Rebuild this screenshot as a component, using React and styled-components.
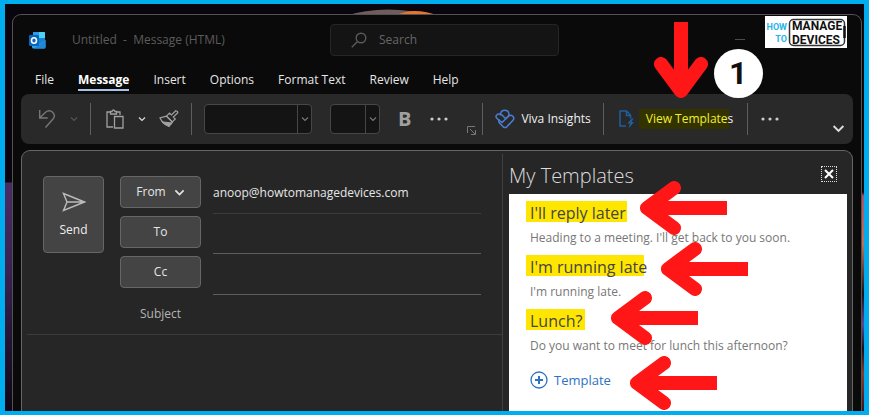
import React from 'react';
import styled, { createGlobalStyle } from 'styled-components';

// styled-components

const GlobalStyle = createGlobalStyle`
    * {
        box-sizing: border-box;
    }

    body {
        margin: 0;
        font-family: 'Open Sans', 'Liberation Sans', sans-serif;
        font-size: 12px;
        line-height: 16px;
        color: white;
    }

    button, input, select {
        font: inherit;
        color: inherit;
    }
`;

const Desktop = styled.div`
    position: relative;
    display: flex;
    min-height: 100vh;
    overflow: hidden;
    padding: 10px 2px 0 7px;
    border: 4px solid #00adef;
    border-width: 4px 5px;
    background: linear-gradient(#08050f 178px, #4a2c64 179px, #3a2150 66%, #0c0616);
`;

const Wallpaper = styled.svg`
    position: absolute;
    top: 4px;
    left: 340px;
`;

const Shine = styled.div`
    position: absolute;
    right: 0;
    top: 0;
    bottom: 0;
    width: 2px;
    background: linear-gradient(#07070a 188px, #b0506a 192px, #c0705a 240px, #1a1018 290px, #5a4a9a 320px, #1a1018 345px, #8a3a2a 370px, #3a1420);
`;

const Window = styled.div`
    position: relative;
    display: flex;
    flex-direction: column;
    flex: 1;
    min-width: 0;
    padding: 0 8px;
    border: 1px solid #555351;
    border-bottom: none;
    border-radius: 9px 9px 0 0;
    background: #0a0a0a;
`;

const TitleBar = styled.header`
    display: flex;
    align-items: center;
    height: 50px;
    padding-left: 8px;
`;

const Title = styled.span`
    width: 222px;
    margin: 0 11px 0 26px;
    color: #5c5c5c;
    white-space: pre;
`;

const SearchBox = styled.label`
    display: flex;
    align-items: center;
    gap: 12px;
    width: 229px;
    height: 32px;
    margin-left: 25px;
    padding-left: 20px;
    border: 1px solid #262626;
    border-radius: 4px;
    background: #141414;
    color: #5a5a5a;
`;

const SearchInput = styled.input`
    flex: 1;
    min-width: 0;
    padding: 0;
    border: none;
    background: none;

    &:focus {
        outline: none;
    }

    &::placeholder {
        color: #666;
        opacity: 1;
    }
`;

const Minimize = styled.button`
    display: flex;
    margin-left: auto;
    margin-right: 108px;
    padding: 0;
    border: none;
    background: none;
    color: #4c4c4c;
`;

const Brand = styled.div`
    position: absolute;
    top: 1px;
    right: 14px;
    display: flex;
`;

const Menu = styled.nav`
    display: flex;
    gap: 24px;
    height: 29px;
    padding: 5px 0 0 14px;
`;

const MenuItem = styled.button`
    height: 21px;
    padding: 0;
    border: none;
    border-bottom: 2px solid ${({ $active }) => ($active ? '#a9c4e8' : 'transparent')};
    background: none;
    color: ${({ $active }) => ($active ? '#fff' : '#e6e6e6')};
    font-weight: ${({ $active }) => ($active ? 700 : 400)};
    white-space: nowrap;
`;

const Ribbon = styled.div`
    display: flex;
    align-items: center;
    height: 50px;
    padding: 0 8px 0 16px;
    border-radius: 8px;
    background: #292929;
`;

const Group = styled.div`
    position: relative;
    display: flex;
    align-items: center;
    gap: ${({ $gap }) => $gap || 0}px;
    height: 32px;
    padding: 0 ${({ $end }) => $end || 12}px 0 ${({ $start }) => $start || 12}px;
    border-right: 1px solid #5e5e5e;

    &:first-child {
        padding-left: 0;
    }

    &:last-child {
        flex: 1;
        padding-right: 0;
        border-right: none;
    }
`;

const IconButton = styled.button`
    display: flex;
    align-items: center;
    padding: 0;
    border: none;
    background: none;
    color: ${({ $color }) => $color || '#a0a0a0'};
    font-size: 20px;
    font-weight: 700;
`;

const Combo = styled.div`
    display: flex;
    width: ${({ $width }) => $width}px;
    height: 30px;
    border: 1px solid #474747;
    border-radius: 4px;
    background: #141414;
    color: #777;
`;

const ComboSelect = styled.select`
    flex: 1;
    min-width: 0;
    border: none;
    appearance: none;
    background: none;
`;

const ComboArrow = styled.span`
    display: flex;
    align-items: center;
    justify-content: center;
    width: 14px;
    border-left: 1px solid #474747;
`;

const Launcher = styled.button`
    align-self: flex-end;
    display: flex;
    padding: 0;
    border: none;
    background: none;
    color: #777;
`;

const Expand = styled(IconButton)`
    align-self: flex-end;
    margin-left: auto;
`;

const Command = styled.button`
    display: flex;
    align-items: center;
    gap: ${({ $gap }) => $gap}px;
    padding: 0;
    border: none;
    background: none;
    color: #f0f0f0;
    white-space: nowrap;
`;

const Marked = styled.span`
    padding: 2px 0 2px 7px;
    background: linear-gradient(90deg, #333300 90px, transparent 90px);
    color: #f1ee30;
`;

const Tail = styled.span`
    color: #f0f0f0;
`;

const DownArrow = styled.svg`
    position: absolute;
    left: 50px;
    bottom: 37px;
`;

const StepBadge = styled.span`
    position: absolute;
    left: 110px;
    bottom: 37px;
    width: 49px;
    height: 49px;
    border-radius: 50%;
    background: white;
    color: #111;
    font-family: Roboto, sans-serif;
    font-size: 32px;
    font-weight: 700;
    line-height: 49px;
    text-align: center;
`;

const Content = styled.div`
    display: flex;
    flex: 1;
    margin-top: 6px;
    border: 1px solid #666;
    border-bottom: none;
    border-radius: 9px 9px 0 0;
    background: #262626;
`;

const Compose = styled.form`
    flex: 1;
    min-width: 0;
    padding: 25px 0 0 5px;
`;

const Address = styled.div`
    display: grid;
    grid-template-columns: 65px 81px 1fr;
    column-gap: 12px;
    padding: 0 21px 0 16px;
`;

const SendButton = styled.button`
    display: flex;
    flex-direction: column;
    align-items: center;
    gap: 10px;
    width: 61px;
    height: 77px;
    padding: 15px 0 0;
    border: 1px solid #666;
    border-radius: 4px;
    background: #444;
    color: #eee;
`;

const Buttons = styled.div`
    display: flex;
    flex-direction: column;
    gap: 8px;
`;

const FieldButton = styled.button`
    display: flex;
    align-items: center;
    justify-content: center;
    gap: 8px;
    height: 32px;
    border: 1px solid #666;
    border-radius: 4px;
    background: #444;
    color: #e6e6e6;
`;

const Fields = styled.div`
    display: flex;
    flex-direction: column;
`;

const FieldInput = styled.input`
    height: ${({ $height }) => $height}px;
    padding: 0 0 5px;
    border: none;
    border-bottom: 1px solid ${({ $faint }) => ($faint ? '#3c3c3c' : '#5c5c5c')};
    background: none;
    color: #e6e6e6;

    &:focus {
        outline: none;
    }
`;

const SubjectRow = styled.label`
    display: flex;
    height: 40px;
    padding: 11px 22px 0 93px;
    border-bottom: 1px solid #3c3c3c;
    color: #b4b4b4;
`;

const SubjectText = styled.span`
    width: 81px;
    text-align: center;
`;

const SubjectInput = styled(FieldInput)`
    flex: 1;
    min-width: 0;
    margin-left: 12px;
    padding: 0;
    border: none;
`;

const Pane = styled.aside`
    display: flex;
    flex-direction: column;
    width: 350px;
    margin-top: 3px;
    padding: 0 5px 0 6px;
    border-left: 1px solid #404040;
`;

const PaneHeader = styled.div`
    display: flex;
    align-items: center;
    justify-content: space-between;
    height: 40px;
    padding-right: 10px;
`;

const PaneTitle = styled.h2`
    margin: 0;
    padding-top: 3px;
    color: #dcdcdc;
    font-size: 20px;
    font-weight: 300;
    line-height: 28px;
`;

const CloseButton = styled.button`
    display: flex;
    align-items: center;
    justify-content: center;
    width: 16px;
    height: 16px;
    padding: 0;
    border: 1px dotted #ddd;
    background: none;
    color: #fff;
`;

const PaneBody = styled.div`
    flex: 1;
    padding: 5px 21px 0;
    background: white;
`;

const TemplateItem = styled.div`
    position: relative;
    height: ${({ $height }) => $height || 54}px;
`;

const TemplateName = styled.h3`
    display: inline-block;
    margin: 0 0 0 -4px;
    padding: 0 3px 0 4px;
    background: linear-gradient(#ffe600, #ffe600) no-repeat 0 2px / ${({ $mark }) => $mark} 21px;
    color: #444;
    font-size: 16px;
    font-weight: 400;
    line-height: 28px;
`;

const TemplateText = styled.p`
    margin: 0;
    color: #777;
    line-height: 22px;
`;

const AddTemplate = styled.button`
    display: flex;
    align-items: center;
    gap: 6px;
    padding: 0;
    border: none;
    background: none;
    color: #2b72c4;
    font-size: 13px;
    line-height: 38px;
`;

const LeftArrow = styled.svg`
    position: absolute;
    top: ${({ $top }) => $top}px;
    left: ${({ $left }) => $left}px;
`;

// data
const tabs = ['File', 'Message', 'Insert', 'Options', 'Format Text', 'Review', 'Help'];

const templates = [
    { name: "I'll reply later", text: "Heading to a meeting. I'll get back to you soon.", mark: '101px', left: 110, top: -18 },
    { name: "I'm running late", text: "I'm running late.", mark: '118px', left: 131, top: -11 },
    { name: 'Lunch?', text: 'Do you want to meet for lunch this afternoon?', mark: '100%', left: 81, top: -16 },
];

// icons
const Chevron = ({ size = 8 }) => (
    <svg width={size} height={size} viewBox="0 0 8 8" fill="none" stroke="currentColor" strokeWidth="1.2">
        <path d="M1 2.5 4 5.5 7 2.5" />
    </svg>
);

const Dots = () => (
    <svg width="20" height="6" viewBox="0 0 20 6" fill="currentColor">
        <circle cx="3" cy="3" r="1.6" />
        <circle cx="10" cy="3" r="1.6" />
        <circle cx="17" cy="3" r="1.6" />
    </svg>
);

const OutlookIcon = () => (
    <svg width="17" height="17" viewBox="0 0 17 17">
        <rect x="4" y="0" width="12" height="13" rx="1" fill="#1683d2" />
        <path d="M10 0h5q1 0 1 1v5h-6z" fill="#4fd0f7" />
        <path d="M4 1q0-1 1-1h5v6H4z" fill="#2a9fe6" />
        <path d="M3 8l7 4 6.500-4v7q0 1.500-1.500 1.500H4.500Q3 16.500 3 15z" fill="#2aa5ea" />
        <path d="M16.500 8v7q0 1.500-1.500 1.500H5z" fill="#1f86d8" />
        <rect x="0" y="3" width="10" height="11" rx="1" fill="#0a63bd" />
        <ellipse cx="5" cy="8.500" rx="2.500" ry="2.800" fill="none" stroke="#fff" strokeWidth="1.600" />
    </svg>
);

const BrandLogo = () => (
    <svg width="82" height="32" viewBox="0 0 82 32" fontFamily="Roboto, sans-serif" fontWeight="700">
        <rect width="82" height="32" fill="#fff" />
        <g fill="#27b5e8" fontSize="9" textAnchor="end">
            <text x="22" y="14">HOW</text>
            <text x="22" y="26">TO</text>
        </g>
        <rect x="24.500" y="3.500" width="55" height="26" rx="4" fill="none" stroke="#333" strokeWidth="1.500" />
        <path d="M79.500 10v12" stroke="#111" strokeWidth="2.500" />
        <g fill="#111" fontSize="12">
            <text x="27" y="14">MANAGE</text>
            <text x="27" y="28">DEVICES</text>
        </g>
    </svg>
);

const PointLeft = ({ top, left }) => (
    <LeftArrow $top={top} $left={left} width="88" height="54" viewBox="0 0 88 54" fill="none" stroke="#ff1616" strokeWidth="14">
        <path d="M34 7 7 27 34 47" strokeLinecap="round" strokeLinejoin="round" />
        <path d="M8 27H87" />
    </LeftArrow>
);

// components
const RibbonBar = () => (
    <Ribbon>
        <Group $gap={14}>
            <IconButton aria-label="Undo" $color="#777">
                <svg width="19" height="20" viewBox="0 0 19 20" fill="none" stroke="currentColor" strokeWidth="1.400">
                    <path d="M2.700 1v8h8M3 8.700 8.500 3.300C13.500-1 20 5 16 10L8.500 18.500" />
                </svg>
            </IconButton>
            <IconButton aria-label="Undo options" $color="#555"><Chevron /></IconButton>
        </Group>
        <Group $gap={13} $start={14}>
            <IconButton aria-label="Paste">
                <svg width="20" height="20" viewBox="0 0 20 20" fill="none" stroke="currentColor" strokeWidth="1.300">
                    <path d="M8 18H2V3h3M12 3h3v3M5.500 5V2.500H7Q8.500-.5 10 2.500h1.500V5z" />
                    <path d="M9.500 7.500h8.500v11.500H9.500z" />
                </svg>
            </IconButton>
            <IconButton aria-label="Paste options" $color="#ddd"><Chevron /></IconButton>
            <IconButton aria-label="Format Painter">
                <svg width="20" height="18" viewBox="0 0 20 18" fill="none" stroke="currentColor" strokeWidth="1.200">
                    <path d="M18.500 1.500 16.700.8 12.500 5 10.500 3.200 7.500 6.200 13.300 12l3-3-2-2L18.800 2.800z" />
                    <path d="M7.500 6.200 1 8q1.500 3 3.500 5l7.500 1 1.300-2z" />
                    <path d="M3.500 12q3 3.500 6.500 4.500l2.500-3.500z" fill="currentColor" />
                </svg>
            </IconButton>
        </Group>
        <Group $gap={18} $end={6}>
            <Combo $width={108}>
                <ComboSelect aria-label="Font" />
                <ComboArrow><Chevron /></ComboArrow>
            </Combo>
            <Combo $width={50}>
                <ComboSelect aria-label="Font size" />
                <ComboArrow><Chevron /></ComboArrow>
            </Combo>
            <IconButton aria-label="Bold">B</IconButton>
            <IconButton aria-label="More formatting" $color="#ccc"><Dots /></IconButton>
            <Launcher type="button" aria-label="Font settings">
                <svg width="9" height="9" viewBox="0 0 9 9" fill="none" stroke="currentColor">
                    <path d="M.5 7V.5H8M3 3l5 5M8.500 4v4.500H4" />
                </svg>
            </Launcher>
        </Group>
        <Group>
            <Command $gap={6}>
                <svg width="20" height="20" viewBox="0 0 20 20" fill="none" stroke="#4a7fd6" strokeWidth="1.500">
                    <path d="M5.500 6.500V5a4.300 4.300 0 0 1 8.500 0q0 1.800-1.300 3L7 13.500 2 9.500Q-.3 7 2.500 5.300 5 4.300 7 6l3.500 3.500" />
                    <path d="M11.500 9 14 6.800q2-1.200 3.800.5 2 2.200 0 4.200l-6 6.300q-1.800 1.500-3.600 0L4.500 14q-1.500-2 0-3.500" />
                </svg>
                Viva Insights
            </Command>
        </Group>
        <Group $start={14} $end={14}>
            <Command $gap={4}>
                <svg width="17" height="20" viewBox="0 0 17 20" fill="none" stroke="#1f5f9e" strokeWidth="1.500">
                    <path d="M8 17H2V2h6.500l4 4v3.500M8.500 2v4.500h4" />
                    <path d="M13.500 9.500 9.500 14.500H12L10.500 19.500 16 13h-2.500l2-3.500z" fill="#1f5f9e" stroke="none" />
                </svg>
                <Marked>View Template<Tail>s</Tail></Marked>
            </Command>
            <DownArrow width="54" height="76" viewBox="0 0 54 76" fill="none" stroke="#ff1616" strokeWidth="14">
                <path d="M7 42 27 69 47 42" strokeLinecap="round" strokeLinejoin="round" />
                <path d="M27 0V68" />
            </DownArrow>
            <StepBadge>1</StepBadge>
        </Group>
        <Group>
            <IconButton aria-label="More commands" $color="#ccc"><Dots /></IconButton>
            <Expand aria-label="Ribbon options" $color="#ddd"><Chevron size={13} /></Expand>
        </Group>
    </Ribbon>
);

const ComposeForm = () => (
    <Compose onSubmit={e => e.preventDefault()}>
        <Address>
            <SendButton>
                <svg width="24" height="20" viewBox="0 0 24 20" fill="none" stroke="#bbb" strokeWidth="1.400">
                    <path d="M1.500 1.500 22.500 10 1.500 18.500 5 10zM5 10h17" />
                </svg>
                Send
            </SendButton>
            <Buttons>
                <FieldButton type="button">From <Chevron size={11} /></FieldButton>
                <FieldButton type="button">To</FieldButton>
                <FieldButton type="button">Cc</FieldButton>
            </Buttons>
            <Fields>
                <FieldInput aria-label="From" defaultValue="anoop@howtomanagedevices.com" $height={38} $faint />
                <FieldInput aria-label="To" $height={40} />
                <FieldInput aria-label="Cc" $height={41} />
            </Fields>
        </Address>
        <SubjectRow>
            <SubjectText>Subject</SubjectText>
            <SubjectInput $height={16} />
        </SubjectRow>
    </Compose>
);

const TemplatesPane = () => (
    <Pane>
        <PaneHeader>
            <PaneTitle>My Templates</PaneTitle>
            <CloseButton aria-label="Close">
                <svg width="10" height="10" viewBox="0 0 10 10" stroke="currentColor" strokeWidth="2">
                    <path d="M1 1 9 9M9 1 1 9" />
                </svg>
            </CloseButton>
        </PaneHeader>
        <PaneBody>
            {templates.map(item => (
                <TemplateItem key={item.name}>
                    <TemplateName $mark={item.mark}>{item.name}</TemplateName>
                    <TemplateText>{item.text}</TemplateText>
                    <PointLeft top={item.top} left={item.left} />
                </TemplateItem>
            ))}
            <TemplateItem $height={48}>
                <AddTemplate>
                    <svg width="18" height="18" viewBox="0 0 18 18" fill="none" stroke="currentColor">
                        <circle cx="9" cy="9" r="8" strokeWidth="1.300" />
                        <path d="M9 5v8M5 9h8" strokeWidth="2" />
                    </svg>
                    Template
                </AddTemplate>
                <PointLeft top={-5} left={100} />
            </TemplateItem>
        </PaneBody>
    </Pane>
);

const App = () => {
    return (
        <Desktop>
            <GlobalStyle />
            <Wallpaper width="100" height="8" viewBox="0 0 100 8">
                <path d="M0 8Q40-5 92 8z" fill="#6f5c5c" />
                <path d="M50 8Q68-2 94 8z" fill="#e8752e" />
            </Wallpaper>
            <Shine />
            <Window>
                <TitleBar>
                    <OutlookIcon />
                    <Title>{'Untitled  -  Message (HTML)'}</Title>
                    <SearchBox>
                        <svg width="16" height="16" viewBox="0 0 16 16" fill="none" stroke="currentColor" strokeWidth="1.400">
                            <circle cx="10" cy="6" r="4.800" />
                            <path d="M6.500 9.500.8 15.200" />
                        </svg>
                        <SearchInput placeholder="Search" />
                    </SearchBox>
                    <Minimize aria-label="Minimize">
                        <svg width="10" height="10" viewBox="0 0 10 10" stroke="currentColor">
                            <path d="M0 4.500h10" />
                        </svg>
                    </Minimize>
                </TitleBar>
                <Menu>
                    {tabs.map(tab => (
                        <MenuItem key={tab} $active={tab === 'Message'}>{tab}</MenuItem>
                    ))}
                </Menu>
                <RibbonBar />
                <Content>
                    <ComposeForm />
                    <TemplatesPane />
                </Content>
                <Brand><BrandLogo /></Brand>
            </Window>
        </Desktop>
    );
};

export default App;
